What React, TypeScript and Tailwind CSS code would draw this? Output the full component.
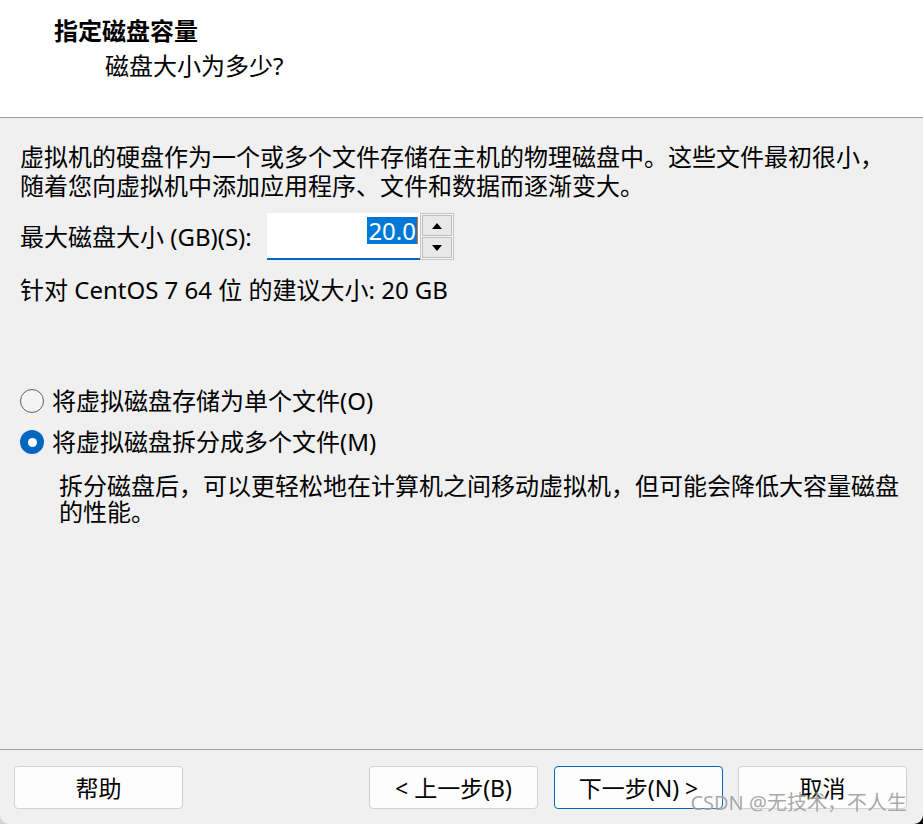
import React from "react";

const font = "font-['Noto_Sans','Noto_Sans_CJK_SC',sans-serif]";

function Btn({ label, primary }: { label: string; primary?: boolean }) {
  return (
    <div
      className={`w-[169px] h-[43px] flex items-center justify-center rounded-[4px] bg-[#fdfdfd] text-[23px] leading-[30px] text-black ${
        primary ? "border border-[#0067c0]" : "border border-[#d0d0d0]"
      }`}
    >
      {label}
    </div>
  );
}

function Radio({ checked }: { checked?: boolean }) {
  return checked ? (
    <div className="w-[24px] h-[24px] rounded-full bg-[#0067c0] flex items-center justify-center shrink-0">
      <div className="w-[9px] h-[9px] rounded-full bg-white" />
    </div>
  ) : (
    <div className="w-[24px] h-[24px] rounded-full border-[1.5px] border-[#606060] bg-[#f3f3f3] shrink-0" />
  );
}

export default function App() {
  return (
    <div className={`w-[923px] h-[824px] bg-[linear-gradient(to_right,#d4d4d4_50%,#000_50%)] ${font}`}>
      <div className="relative w-full h-full flex flex-col bg-[#f0f0f0] rounded-b-[9px] overflow-hidden text-black">
        {/* header */}
        <div className="h-[118px] shrink-0 bg-white border-b border-[#a0a0a0]">
          <div className="pl-[54px] pt-[15px] text-[24px] leading-[32px] font-bold">指定磁盘容量</div>
          <div className="pl-[105px] mt-[3px] text-[24px] leading-[32px]">磁盘大小为多少?</div>
        </div>

        {/* body */}
        <div className="flex-1 px-[20px] pt-[24px] text-[24px]">
          <p className="leading-[29px]">
            虚拟机的硬盘作为一个或多个文件存储在主机的物理磁盘中。这些文件最初很小，
            <br />
            随着您向虚拟机中添加应用程序、文件和数据而逐渐变大。
          </p>

          <div className="mt-[13px] h-[47px] flex items-center">
            <span className="w-[247px] shrink-0 leading-[29px] whitespace-nowrap">最大磁盘大小 (GB)(S):</span>
            <div className="h-[47px] flex">
              <div className="w-[153px] h-[47px] bg-white border-b-2 border-[#0067c0] flex items-start justify-end pr-[2px] pt-[4px]">
                <div className="h-[27px] bg-[#0078d7] text-white leading-[27px] px-[1px] border-r border-[#e07020]">20.0</div>
              </div>
              <div className="w-[34px] h-[47px] flex flex-col border border-[#c4c4c4] bg-[#f6f6f6]">
                <div className="flex-1 m-[1px] border border-[#bdbdbd] bg-[#e8e8e8] flex items-center justify-center">
                  <svg width="10" height="6" viewBox="0 0 10 6">
                    <path d="M5 0 L10 6 L0 6 Z" fill="#000" />
                  </svg>
                </div>
                <div className="flex-1 m-[1px] mt-0 border border-[#bdbdbd] bg-[#e8e8e8] flex items-center justify-center">
                  <svg width="10" height="6" viewBox="0 0 10 6">
                    <path d="M0 0 L10 0 L5 6 Z" fill="#000" />
                  </svg>
                </div>
              </div>
            </div>
          </div>

          <p className="mt-[15px] leading-[29px]">针对 CentOS 7 64 位 的建议大小: 20 GB</p>

          <div className="mt-[80px] h-[34px] flex items-center gap-[8px]">
            <Radio />
            <span className="leading-[34px]">将虚拟磁盘存储为单个文件(O)</span>
          </div>
          <div className="mt-[7px] h-[34px] flex items-center gap-[8px]">
            <Radio checked />
            <span className="leading-[34px]">将虚拟磁盘拆分成多个文件(M)</span>
          </div>
          <p className="mt-[14px] pl-[39px] leading-[26px]">
            拆分磁盘后，可以更轻松地在计算机之间移动虚拟机，但可能会降低大容量磁盘
            <br />
            的性能。
          </p>
        </div>

        {/* footer */}
        <div className="shrink-0 border-t border-[#a0a0a0] pt-[16px] pb-[15px] pl-[14px] pr-[16px] flex items-center">
          <Btn label="帮助" />
          <div className="flex-1" />
          <Btn label="< 上一步(B)" />
          <div className="w-[16px]" />
          <Btn label="下一步(N) >" primary />
          <div className="w-[15px]" />
          <Btn label="取消" />
        </div>

        <div className="absolute right-[16px] bottom-[8px] text-[20px] leading-[26px] text-[rgba(140,140,140,0.75)] [text-shadow:0_0_2px_rgba(255,255,255,0.8)]">
          CSDN @无技术，不人生
        </div>
      </div>
    </div>
  );
}
